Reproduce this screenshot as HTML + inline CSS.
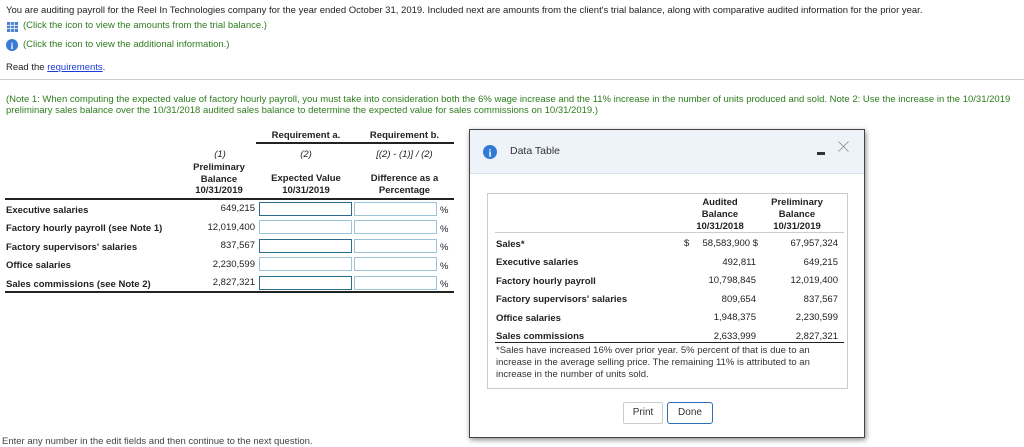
<!DOCTYPE html>
<html><head><style>
body{margin:0;width:1024px;height:441px;overflow:hidden;background:#fff;font-family:"Liberation Sans",Arial,sans-serif;font-size:9.5px;color:#222;position:relative}
.a{position:absolute;white-space:nowrap}
.g{color:#2e7d1e}
.b{font-weight:bold}
.c{text-align:center}
.r{text-align:right}
.in{position:absolute;height:12px;border:1px solid #2a6a8a;background:#fff}
.in2{border-color:#9cc4d8}
.ln{position:absolute;background:#222;height:1.5px}
</style></head><body>
<div class="a" style="left:6px;top:5px">You are auditing payroll for the Reel In Technologies company for the year ended October 31, 2019. Included next are amounts from the client's trial balance, along with comparative audited information for the prior year.</div>
<svg class="a" style="left:7px;top:22px" width="11" height="10"><rect x="0" y="0" width="11" height="10" fill="#4a7fd0"/><g stroke="#fff" stroke-width="0.8"><line x1="0" y1="3.3" x2="11" y2="3.3"/><line x1="0" y1="6.6" x2="11" y2="6.6"/><line x1="3.7" y1="0" x2="3.7" y2="10"/><line x1="7.3" y1="0" x2="7.3" y2="10"/></g></svg>
<div class="a g" style="left:23px;top:20px">(Click the icon to view the amounts from the trial balance.)</div>
<svg class="a" style="left:6px;top:39px" width="12" height="12"><circle cx="6" cy="6" r="6" fill="#3a7bd5"/><text x="6" y="10" font-size="9" font-weight="bold" fill="#fff" text-anchor="middle" font-family="Liberation Serif">i</text></svg>
<div class="a g" style="left:23px;top:39px">(Click the icon to view the additional information.)</div>
<div class="a" style="left:6px;top:62px">Read the <span style="color:#1a3cd8;text-decoration:underline">requirements</span>.</div>
<div class="a" style="left:0;top:79px;width:1024px;height:1px;background:#ccc"></div>
<div class="a g" style="left:6px;top:94px">(Note 1: When computing the expected value of factory hourly payroll, you must take into consideration both the 6% wage increase and the 11% increase in the number of units produced and sold. Note 2: Use the increase in the 10/31/2019</div>
<div class="a g" style="left:6px;top:105px">preliminary sales balance over the 10/31/2018 audited sales balance to determine the expected value for sales commissions on 10/31/2019.)</div>

<div class="a b c" style="left:256px;top:130px;width:100px">Requirement a.</div>
<div class="a b c" style="left:356px;top:130px;width:97px">Requirement b.</div>
<div class="ln" style="left:256px;top:142px;width:198px"></div>
<div class="a c" style="left:192px;top:149px;width:56px;font-style:italic">(1)</div>
<div class="a c" style="left:256px;top:149px;width:100px;font-style:italic">(2)</div>
<div class="a c" style="left:356px;top:149px;width:97px;font-style:italic">[(2) - (1)] / (2)</div>
<div class="a b c" style="left:186px;top:162px;width:66px;line-height:11.5px">Preliminary<br>Balance<br>10/31/2019</div>
<div class="a b c" style="left:256px;top:173px;width:100px;line-height:11.5px">Expected Value<br>10/31/2019</div>
<div class="a b c" style="left:356px;top:173px;width:97px;line-height:11.5px">Difference as a<br>Percentage</div>
<div class="ln" style="left:5px;top:198px;width:449px"></div>

<div class="a b" style="left:6px;top:205px">Executive salaries</div>
<div class="a b" style="left:6px;top:223px">Factory hourly payroll (see Note 1)</div>
<div class="a b" style="left:6px;top:242px">Factory supervisors' salaries</div>
<div class="a b" style="left:6px;top:260px">Office salaries</div>
<div class="a b" style="left:6px;top:279px">Sales commissions (see Note 2)</div>
<div class="a r" style="left:190px;top:203px;width:65px">649,215</div>
<div class="a r" style="left:190px;top:222px;width:65px">12,019,400</div>
<div class="a r" style="left:190px;top:240px;width:65px">837,567</div>
<div class="a r" style="left:190px;top:259px;width:65px">2,230,599</div>
<div class="a r" style="left:190px;top:277px;width:65px">2,827,321</div>
<div class="in" style="left:259px;top:202px;width:91px"></div><div class="in in2" style="left:354px;top:202px;width:81px"></div>
<div class="in in2" style="left:259px;top:220px;width:91px"></div><div class="in in2" style="left:354px;top:220px;width:81px"></div>
<div class="in" style="left:259px;top:239px;width:91px"></div><div class="in in2" style="left:354px;top:239px;width:81px"></div>
<div class="in in2" style="left:259px;top:257px;width:91px"></div><div class="in in2" style="left:354px;top:257px;width:81px"></div>
<div class="in" style="left:259px;top:276px;width:91px"></div><div class="in in2" style="left:354px;top:276px;width:81px"></div>
<div class="a" style="left:440px;top:205px">%</div><div class="a" style="left:440px;top:224px">%</div><div class="a" style="left:440px;top:242px">%</div><div class="a" style="left:440px;top:261px">%</div><div class="a" style="left:440px;top:279px">%</div>
<div class="ln" style="left:5px;top:291px;width:449px"></div>
<div class="a" style="left:2px;top:436px;color:#444">Enter any number in the edit fields and then continue to the next question.</div>

<div class="a" style="left:469px;top:129px;width:394px;height:307px;border:1px solid #444;background:#fff;box-shadow:1px 2px 5px rgba(0,0,0,.45)">
 <div class="a" style="left:0;top:0;width:394px;height:43px;background:#eef3f9;border-bottom:1px solid #d8e2ee"></div>
 <svg class="a" style="left:13px;top:15px" width="14" height="14"><circle cx="7" cy="7" r="7" fill="#2f7bd4"/><text x="7" y="11.5" font-size="10" font-weight="bold" fill="#fff" text-anchor="middle" font-family="Liberation Serif">i</text></svg>
 <div class="a" style="left:40px;top:15px;font-size:10.5px;color:#333">Data Table</div>
 <div class="a" style="left:347px;top:22px;width:8px;height:2.5px;background:#333"></div>
 <svg class="a" style="left:368px;top:11px" width="11" height="11"><path d="M0.5 0.5L10.5 10.5M10.5 0.5L0.5 10.5" stroke="#888" stroke-width="0.8"/></svg>
 <div class="a" style="left:17px;top:63px;width:359px;height:194px;border:1px solid #ccc"></div>
 <div class="a b c" style="left:212px;top:67px;width:76px;line-height:12px">Audited<br>Balance<br>10/31/2018</div>
 <div class="a b c" style="left:289px;top:67px;width:76px;line-height:12px">Preliminary<br>Balance<br>10/31/2019</div>
 <div class="a" style="left:25px;top:102px;width:349px;height:1px;background:#ccc"></div>
 <div class="a b" style="left:26px;top:109px">Sales*</div>
 <div class="a b" style="left:26px;top:127px">Executive salaries</div>
 <div class="a b" style="left:26px;top:146px">Factory hourly payroll</div>
 <div class="a b" style="left:26px;top:164px">Factory supervisors' salaries</div>
 <div class="a b" style="left:26px;top:183px">Office salaries</div>
 <div class="a b" style="left:26px;top:201px">Sales commissions</div>
 <div class="a" style="left:214px;top:108px">$</div>
 <div class="a r" style="left:210px;top:108px;width:78px">58,583,900 $</div>
 <div class="a r" style="left:220px;top:127px;width:66px">492,811</div>
 <div class="a r" style="left:220px;top:145px;width:66px">10,798,845</div>
 <div class="a r" style="left:220px;top:164px;width:66px">809,654</div>
 <div class="a r" style="left:220px;top:182px;width:66px">1,948,375</div>
 <div class="a r" style="left:220px;top:201px;width:66px">2,633,999</div>
 <div class="a r" style="left:290px;top:108px;width:78px">67,957,324</div>
 <div class="a r" style="left:290px;top:127px;width:78px">649,215</div>
 <div class="a r" style="left:290px;top:145px;width:78px">12,019,400</div>
 <div class="a r" style="left:290px;top:164px;width:78px">837,567</div>
 <div class="a r" style="left:290px;top:182px;width:78px">2,230,599</div>
 <div class="a r" style="left:290px;top:201px;width:78px">2,827,321</div>
 <div class="a" style="left:25px;top:212px;width:349px;height:1px;background:#222"></div>
 <div class="a" style="left:26px;top:215px;line-height:12px;color:#333">*Sales have increased 16% over prior year. 5% percent of that is due to an<br>increase in the average selling price. The remaining 11% is attributed to an<br>increase in the number of units sold.</div>
 <div class="a c" style="left:153px;top:272px;width:38px;height:20px;line-height:20px;border:1px solid #ccc;border-radius:2px;font-size:10px;color:#333">Print</div>
 <div class="a c" style="left:197px;top:272px;width:44px;height:20px;line-height:20px;border:1.5px solid #2f6fb8;border-radius:3px;font-size:10px;color:#333">Done</div>
</div>
</body></html>
